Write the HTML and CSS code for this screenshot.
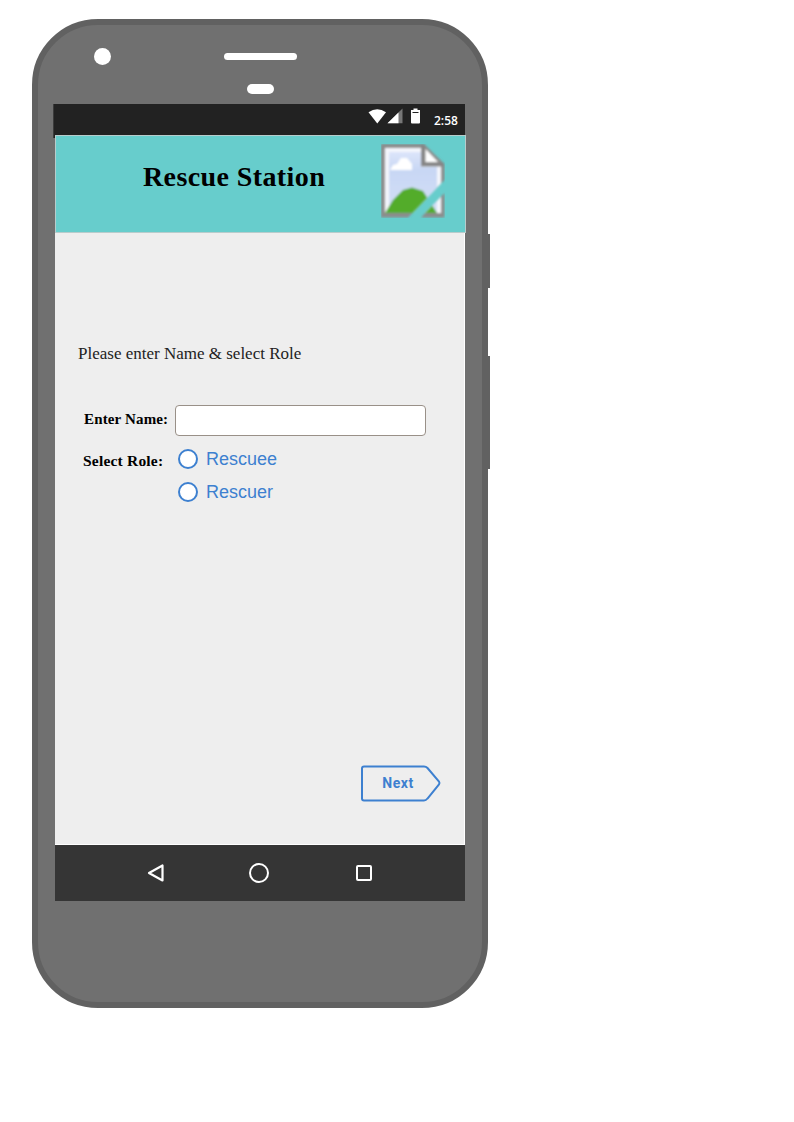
FILE: index.html
```html
<!DOCTYPE html>
<html lang="en">
<head>
<meta charset="utf-8">
<title>Rescue Station</title>
<link rel="stylesheet" href="styles.css">
</head>
<body>
<div class="phone">
  <span class="side-key power"></span>
  <span class="side-key volume"></span>
  <div class="bezel">
    <span class="camera"></span>
    <div class="sensors"><span class="speaker"></span><span class="sensor"></span></div>
  </div>
  <div class="screen">
    <div class="status">
      <svg class="status-icons" width="54" height="18" viewBox="0 0 54 18">
        <path d="M.5 4.200Q9.300-1.800 18 4.200L9.300 15.500Z" fill="#fff"/>
        <path d="M34.500.5V15.200H19.500Z" fill="#777"/>
        <path d="M30.500 4.500V15.200H19.500Z" fill="#fff"/>
        <path d="M45.500.5h4v1.500h2.500V14.500a1 1 0 0 1-1 1h-7a1 1 0 0 1-1-1V2H45.500Z" fill="#fff"/>
        <path d="M44.500 4.500h6" stroke="#222" stroke-width="1"/>
      </svg>
      <span class="time">2:58</span>
    </div>
    <header class="header">
      <h1 class="title">Rescue Station</h1>
      <svg class="picture" width="64" height="74" viewBox="0 0 64 74">
        <defs>
          <linearGradient id="sky" x1="0" y1="0" x2="0" y2="1"><stop offset="0" stop-color="#dce5fa"/><stop offset=".3" stop-color="#c8d7f4"/><stop offset="1" stop-color="#d3def6"/></linearGradient>
          <clipPath id="sheet"><path d="M0 0H43L63.500 20V36L27 73.500H0Z M63.500 49V73.500H40Z"/></clipPath>
          <filter id="soft" x="-10%" y="-10%" width="120%" height="120%"><feGaussianBlur stdDeviation="1"/></filter>
        </defs>
        <g filter="url(#soft)">
          <g clip-path="url(#sheet)">
            <path d="M0 0H64V74H0Z" fill="#8c8c8c"/>
            <path d="M4 4H41V22H60V69H4Z" fill="#f4f6fc"/>
            <path d="M8 8H40V23H56V69H8Z" fill="url(#sky)"/>
            <path d="M9 26l3-5 4-1 4-6h6l5 6v6Z" fill="#fff"/>
            <path d="M4 69L12 56L22 46L31 43.500L42 47L56 69Z" fill="#52ac2c"/>
            <path d="M42 0V20.500H63" fill="none" stroke="#858585" stroke-width="4"/>
            <path d="M44.500 5V18H57Z" fill="#fff"/>
          </g>
        </g>
      </svg>
    </header>
    <main class="content">
      <p class="intro">Please enter Name &amp; select Role</p>
      <form class="form">
        <label class="label name-label" for="name">Enter Name:</label>
        <input class="name" id="name" type="text">
        <span class="label role-label">Select Role:</span>
        <div class="roles">
          <label class="role"><input class="radio" type="radio" name="role"><span>Rescuee</span></label>
          <label class="role"><input class="radio" type="radio" name="role"><span>Rescuer</span></label>
        </div>
      </form>
      <button class="next" type="button">
        <svg class="next-shape" width="82" height="38" viewBox="0 0 82 38"><path d="M4 2.500H64Q66 2.500 67.500 4L79 17.500Q80 19 79 20.500L67.500 34.500Q66 36.500 64 36.500H4Q2 36.500 2 34.500V4.500Q2 2.500 4 2.500Z" fill="none" stroke="#3d80d0" stroke-width="2"/></svg>
        <span class="next-text">Next</span>
      </button>
    </main>
    <nav class="nav">
      <svg width="20" height="22" viewBox="0 0 20 22"><path d="M3 11L16.500 3.500V18.500Z" fill="none" stroke="#fff" stroke-width="2.200" stroke-linejoin="round"/></svg>
      <svg width="22" height="22" viewBox="0 0 22 22"><circle cx="11" cy="11" r="9" fill="none" stroke="#fff" stroke-width="2"/></svg>
      <svg width="18" height="22" viewBox="0 0 18 22"><rect x="2" y="4" width="14" height="14" rx="1" fill="none" stroke="#fff" stroke-width="2"/></svg>
    </nav>
  </div>
</div>
</body>
</html>
```

FILE: styles.css
```css
* { box-sizing: border-box; }
body { margin: 0; background: #fff; padding: 19px 0 0 32px; font-family: "Liberation Serif", serif; }
.phone { position: relative; width: 456px; height: 989px; border: 6px solid #616161; border-radius: 66px; background: #707070; padding: 0 17px; }
.side-key { position: absolute; left: 450px; width: 2px; background: #616161; }
.power { top: 209px; height: 54px; }
.volume { top: 331px; height: 113px; }
.bezel { height: 79px; display: flex; padding: 23px 0 0 39px; }
.camera { width: 17px; height: 17px; border-radius: 50%; background: #fff; }
.sensors { margin: 5px 0 0 113px; width: 73px; display: flex; flex-direction: column; align-items: center; gap: 24px; }
.speaker { width: 73px; height: 7px; border-radius: 4px; background: #fff; }
.sensor { width: 27px; height: 10px; border-radius: 5px; background: #fff; }
.screen { width: 410px; }
.status { height: 34px; width: 412px; margin: 0 0 -3px -2px; border-left: 1px solid #3c3c3c; background: #222; display: flex; padding: 4px 0 0 314px; color: #fff; }
.status-icons { flex: none; }
.time { font: 600 12px/16px "Open Sans", sans-serif; margin: 5px 0 0 12px; white-space: nowrap; }
.header { position: relative; width: 411px; height: 98px; background: #67cdcc; border: 1px solid #b8cccc; display: flex; align-items: flex-start; }
.title { margin: 23px 0 0 87px; width: 238px; font-size: 28px; line-height: 36px; letter-spacing: .4px; white-space: nowrap; color: #000; }
.picture { flex: none; margin-top: 8px; }
.content { height: 612px; background: #eee; border-right: 1px solid #fff; border-bottom: 1px solid #fff; display: flex; flex-direction: column; }
.intro { margin: 111px 0 0 23px; font-size: 17px; line-height: 20px; color: #222; white-space: nowrap; }
.form { margin: 41px 0 0 28px; display: grid; grid-template-columns: 92px 251px; grid-template-rows: 31px auto; row-gap: 7px; }
.label { font-size: 15px; font-weight: bold; line-height: 20px; color: #000; white-space: nowrap; }
.name-label { padding: 4px 0 0 1px; letter-spacing: .15px; }
.role-label { padding-top: 8px; font-size: 15.5px; letter-spacing: .2px; }
.name { width: 251px; height: 31px; margin: 0; border: 1px solid #999088; border-radius: 4px; background: #fff; }
.roles { display: flex; flex-direction: column; gap: 11px; padding: 5px 0 0 3px; }
.role { display: flex; align-items: center; gap: 8px; height: 22px; font: 18px/22px "Liberation Sans", sans-serif; color: #3d80d0; }
.radio { appearance: none; width: 20px; height: 20px; margin: 0 0 1px; border: 2px solid #3d80d0; border-radius: 50%; background: #fff; }
.next { position: relative; width: 82px; height: 38px; margin: auto 22px 42px auto; padding: 0; border: 0; background: none; }
.next-shape { display: block; }
.next-text { position: absolute; inset: 0 6px 0 0; font: bold 14px/38px Roboto, sans-serif; letter-spacing: .5px; color: #3d80d0; }
.nav { height: 56px; background: #353535; display: flex; align-items: center; padding-left: 91px; }
.nav svg + svg { margin-left: 82px; }
.nav svg:last-child { margin-left: 85px; }
```
